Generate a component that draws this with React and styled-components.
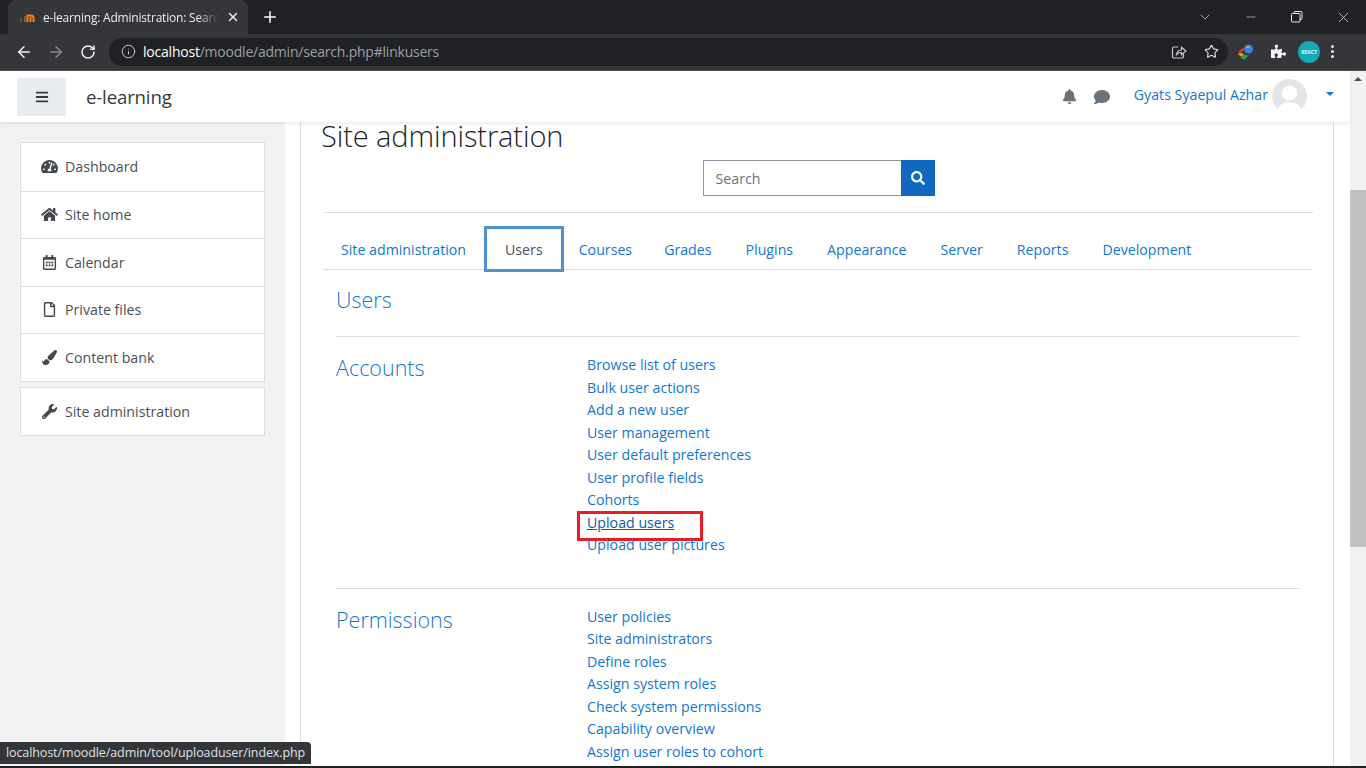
import React from 'react';
import styled, { createGlobalStyle } from 'styled-components';
import { FaBars, FaBell, FaComment, FaSearch, FaTachometerAlt, FaHome, FaRegCalendarAlt, FaRegFile, FaPaintBrush, FaWrench, FaPuzzlePiece } from 'react-icons/fa';
import { ArrowLeft, ArrowRight, RotateCw, Info, Star, X, Plus, ChevronDown, Minus } from 'lucide-react';

const Global = createGlobalStyle`
  html, body { margin: 0; padding: 0; height: 768px; overflow: hidden; background: #fff; }
  * { box-sizing: border-box; }
  body { font-family: "Open Sans", "Noto Sans", sans-serif; }
`;
const Screen = styled.div`width:1366px;height:768px;display:flex;flex-direction:column;position:relative;overflow:hidden;`;
const TabStrip = styled.div`height:34px;background:#202124;display:flex;align-items:flex-end;padding-left:8px;color:#fff;`;
const Tab = styled.div`width:240px;height:34px;background:#35363a;border-radius:8px 8px 0 0;display:flex;align-items:center;padding:0 8px 0 12px;gap:7px;`;
const TabTitle = styled.span`flex:1;font:12px "Open Sans",sans-serif;letter-spacing:-.2px;color:#e8eaed;white-space:nowrap;overflow:hidden;-webkit-mask-image:linear-gradient(90deg,#000 88%,transparent);`;
const NewTab = styled.div`width:28px;height:34px;margin-left:8px;display:flex;align-items:center;justify-content:center;`;
const WinControls = styled.div`margin-left:auto;height:34px;display:flex;align-items:center;color:#e8eaed;`;
const WinBtn = styled.div`width:46px;height:30px;display:flex;align-items:center;justify-content:center;`;
const Toolbar = styled.div`height:37px;background:#35363a;border-bottom:1px solid #4d4e52;display:flex;align-items:center;padding:0 0 1px 8px;color:#e8eaed;`;
const NavIcon = styled.div`width:32px;height:32px;display:flex;align-items:center;justify-content:center;color:${p=>p.$dim?'#8a8b8e':'#f1f3f4'};`;
const Omnibox = styled.div`margin-left:5px;width:1119px;height:28px;background:#202124;border-radius:14px;display:flex;align-items:center;padding:0 9px 0 12px;`;
const Url = styled.div`flex:1;margin-left:7px;font:14px "Open Sans",sans-serif;letter-spacing:-.22px;color:#9aa0a6;b{font-weight:400;color:#fff;}`;
const ExtRow = styled.div`display:flex;align-items:center;margin-left:9px;gap:9px;`;
const Badge = styled.div`width:22px;height:22px;border-radius:50%;background:#12aab5;color:#e8f8f8;font:700 5px "Open Sans",sans-serif;display:flex;align-items:center;justify-content:center;`;
const Dots = styled.div`margin-left:11px;display:flex;flex-direction:column;gap:2px;i{width:3px;height:3px;border-radius:50%;background:#e8eaed;display:block;}`;

const Viewport = styled.div`flex:1;min-height:0;display:flex;`;
const Page = styled.div`flex:1;min-width:0;display:flex;flex-direction:column;position:relative;`;
const Navbar = styled.header`height:51px;background:#fff;box-shadow:0 2px 4px rgba(0,0,0,.08);position:relative;z-index:2;display:flex;align-items:center;padding:0 16px 0 17px;`;
const Burger = styled.div`width:49px;height:38px;background:#e9ecef;display:flex;align-items:center;justify-content:center;color:#343a40;`;
const Brand = styled.div`margin-left:20px;font-size:18.6px;color:#343a40;letter-spacing:-.15px;`;
const NavRight = styled.div`margin-left:auto;display:flex;align-items:center;color:#6a737b;`;
const UserName = styled.span`margin-left:24px;color:#1177d1;font-size:14.2px;position:relative;top:-2px;`;
const Avatar = styled.div`width:35px;height:35px;margin-left:4px;border-radius:50%;background:#e5e5e5;overflow:hidden;`;
const Caret = styled.div`margin-left:19px;position:relative;top:-3px;width:0;height:0;border:4.5px solid transparent;border-top-color:#1177d1;border-bottom:0;`;
const Body = styled.div`flex:1;min-height:0;display:flex;overflow:hidden;`;
const Sidebar = styled.aside`width:285px;background:#f2f2f2;padding:20px 20px 0;flex:none;`;
const NavGroup = styled.div`background:#fff;border:1px solid #dedede;margin-bottom:5px;`;
const NavItem = styled.div`height:${p=>p.$h||47.5}px;display:flex;align-items:center;padding-left:20px;color:#495057;font-size:14.2px;border-top:${p=>p.$first?'0':'1px solid #dedede'};svg{width:17px;height:15px;margin-right:7px;color:#43494f;flex:none;}`;
const Main = styled.main`flex:1;background:#fff;padding:0 16px 0 15px;min-width:0;`;
const Card = styled.div`height:100%;border-left:1px solid #dedede;border-right:1px solid #dedede;padding:0 20px;`;
const Title = styled.h1`margin:0;height:28px;font-weight:300;font-size:29px;line-height:28px;color:#212529;letter-spacing:-.1px;`;
const SearchRow = styled.div`display:flex;justify-content:center;margin:10px 0 0 3px;padding-bottom:16px;border-bottom:1px solid #dedede;`;
const SearchInput = styled.div`width:198px;height:36px;border:1px solid #8f959e;border-right:0;padding:0 12px;display:flex;align-items:center;color:#6a737b;font-size:14.2px;`;
const SearchBtn = styled.div`width:34px;height:36px;background:#1069bf;color:#fff;display:flex;align-items:center;justify-content:center;`;
const Tabs = styled.nav`margin:13px 0 0 2px;height:44px;display:flex;border-bottom:1px solid #dedede;padding-right:0;`;
const TabLink = styled.div`height:46px;padding:0 ${p=>p.$p||17}px;display:flex;align-items:center;font-size:14.2px;color:${p=>p.$active?'#495057':'#1177d1'};border:${p=>p.$active?'3px solid #4f93ce':'0'};background:${p=>p.$active?'#fff':'transparent'};position:relative;${p=>p.$active?'margin:0;':'margin-top:0;'}`;
const Inner = styled.div`padding:0 14px 0 15px;`;
const Heading = styled.h2`margin:0;font-weight:300;font-size:21.5px;line-height:26px;color:#1177d1;`;
const UsersRow = styled.div`padding:17px 0 23px;border-bottom:1px solid #dedede;`;
const Section = styled.section`display:flex;padding:${p=>p.$top||17}px 0 31px;border-bottom:${p=>p.$last?'0':'1px solid #dedede'};`;
const SectionName = styled.div`width:251px;flex:none;padding-top:1px;`;
const Links = styled.ul`list-style:none;margin:0;padding:0;`;
const LinkItem = styled.li`height:22.5px;line-height:22.5px;font-size:14.2px;color:#1177d1;white-space:nowrap;position:relative;`;
const Highlighted = styled.span`text-decoration:underline;color:#0a5aa8;&::after{content:"";position:absolute;left:-10px;top:-1px;width:120px;height:24px;border:3px solid #ec1c24;}`;
const Status = styled.div`position:absolute;left:0;bottom:2px;height:22px;padding:0 6px;background:#35363a;border-radius:0 4px 0 0;color:#dfe1e5;font-size:12.5px;letter-spacing:-.1px;line-height:21px;z-index:5;`;
const Scrollbar = styled.div`width:16px;flex:none;background:#f1f1f1;display:flex;flex-direction:column;align-items:center;`;
const ArrowUp = styled.div`margin-top:6px;flex:none;width:0;height:0;border:4px solid transparent;border-bottom:4px solid #505050;border-top:0;`;
const Thumb = styled.div`margin-top:109px;width:16px;height:357px;flex:none;background:#c1c1c1;`;
const Taskbar = styled.div`height:2px;flex:none;background:#202124;`;

const ChromeIcon = () => (
  <svg width="16" height="16" viewBox="0 0 16 16">
    <path d="M1 13V8.5" stroke="#6b5a4a" strokeWidth="1.5" fill="none"/>
    <path d="M5 13V7" stroke="#8a6a45" strokeWidth="1.6" fill="none"/>
    <path d="M7.5 13V6.5h3.5a2.5 2.5 0 0 1 2.5 2.5V13M10.5 13V8" stroke="#f98012" strokeWidth="2" fill="none"/>
  </svg>
);
const ShareIcon = () => (
  <svg width="16" height="16" viewBox="0 0 16 16" fill="none" stroke="#c6c8ca" strokeWidth="1.2">
    <path d="M7 3H3a1.5 1.5 0 0 0-1.5 1.5v8A1.5 1.5 0 0 0 3 14h8a1.5 1.5 0 0 0 1.5-1.5V10"/>
    <path d="M5.5 10.5C6 7.5 8 6 10.5 6V3.2L15 7l-4.5 3.8V8.5c-2 0-3.700.5-5 2z"/>
  </svg>
);
const GlobeExt = () => (
  <svg width="18" height="18" viewBox="0 0 18 18">
    <path d="M1 11c1-4 4-6 7-6l-2 3c-1.500 0-2 1-2 2l3 1-3 2z" fill="#d8432f"/>
    <path d="M1 12l3-2 3 1.500L5 13z" fill="#f4b400"/>
    <path d="M3 14l4-2.500 5 1L7 17z" fill="#2f9e44"/>
    <circle cx="11.500" cy="6" r="4.500" fill="#3d7fe0"/>
    <path d="M9 4c1-1 3-1 4 0-1 1-3 2-4 0z" fill="#9bd06a"/>
  </svg>
);
const Silhouette = () => (
  <svg width="35" height="35" viewBox="0 0 35 35"><circle cx="17.500" cy="14" r="7.500" fill="#fff"/><ellipse cx="17.500" cy="32" rx="12" ry="9" fill="#fff"/></svg>
);
const RestoreIcon = () => (
  <svg width="12" height="12" viewBox="0 0 12 12" fill="none" stroke="#e8eaed" strokeWidth="1"><rect x=".5" y="2.500" width="8.500" height="8.500" rx="1"/><path d="M3 2.500V1.500a1 1 0 0 1 1-1h6a1 1 0 0 1 1 1v6a1 1 0 0 1-1 1H9"/></svg>
);

const navItems = [
  [FaTachometerAlt, 'Dashboard'], [FaHome, 'Site home'], [FaRegCalendarAlt, 'Calendar'], [FaRegFile, 'Private files'], [FaPaintBrush, 'Content bank'],
];
const tabs = [['Site administration', 18], ['Users', 18, true], ['Courses', 15], ['Grades', 17], ['Plugins', 17], ['Appearance', 17], ['Server', 17], ['Reports', 17], ['Development', 17]];
const accounts = ['Browse list of users', 'Bulk user actions', 'Add a new user', 'User management', 'User default preferences', 'User profile fields', 'Cohorts', 'Upload users', 'Upload user pictures'];
const permissions = ['User policies', 'Site administrators', 'Define roles', 'Assign system roles', 'Check system permissions', 'Capability overview', 'Assign user roles to cohort'];

export default function App() {
  return (
    <Screen>
      <Global />
      <TabStrip>
        <Tab>
          <ChromeIcon />
          <TabTitle>e-learning: Administration: Search</TabTitle>
          <X size={14} strokeWidth={2.5} color="#e8eaed" />
        </Tab>
        <NewTab><Plus size={18} strokeWidth={2} /></NewTab>
        <WinControls>
          <WinBtn><ChevronDown size={16} strokeWidth={1} /></WinBtn>
          <WinBtn><Minus size={14} strokeWidth={1} /></WinBtn>
          <WinBtn><RestoreIcon /></WinBtn>
          <WinBtn><X size={17} strokeWidth={1} /></WinBtn>
        </WinControls>
      </TabStrip>
      <Toolbar>
        <NavIcon><ArrowLeft size={18} strokeWidth={2} /></NavIcon>
        <NavIcon $dim><ArrowRight size={18} strokeWidth={2} /></NavIcon>
        <NavIcon><RotateCw size={16} strokeWidth={2.2} /></NavIcon>
        <Omnibox>
          <Info size={15} color="#c6c8ca" strokeWidth={1.6} />
          <Url><b>localhost</b>/moodle/admin/search.php#linkusers</Url>
          <ShareIcon />
          <Star size={15} strokeWidth={1.8} color="#dfe1e5" style={{ marginLeft: 17 }} />
        </Omnibox>
        <ExtRow>
          <GlobeExt />
          <FaPuzzlePiece size={15} color="#f1f3f4" style={{ marginLeft: 7 }} />
          <Badge style={{ marginLeft: 3 }}>REACT</Badge>
        </ExtRow>
        <Dots><i /><i /><i /></Dots>
      </Toolbar>
      <Viewport>
        <Page>
          <Navbar>
            <Burger><FaBars size={14} /></Burger>
            <Brand>e-learning</Brand>
            <NavRight>
              <FaBell size={15} />
              <FaComment size={16} style={{ marginLeft: 17 }} />
              <UserName>Gyats Syaepul Azhar</UserName>
              <Avatar><Silhouette /></Avatar>
              <Caret />
            </NavRight>
          </Navbar>
          <Body>
            <Sidebar>
              <NavGroup>
                {navItems.map(([I, t], i) => (
                  <NavItem key={t} $first={i === 0}><I />{t}</NavItem>
                ))}
              </NavGroup>
              <NavGroup>
                <NavItem $first><FaWrench />Site administration</NavItem>
              </NavGroup>
            </Sidebar>
            <Main>
              <Card>
                <Title>Site administration</Title>
                <SearchRow>
                  <SearchInput>Search</SearchInput>
                  <SearchBtn><FaSearch size={14} /></SearchBtn>
                </SearchRow>
                <Tabs>
                  {tabs.map(([t, p, a]) => <TabLink key={t} $p={p} $active={a}>{t}</TabLink>)}
                </Tabs>
                <Inner>
                  <UsersRow><Heading>Users</Heading></UsersRow>
                  <Section>
                    <SectionName><Heading>Accounts</Heading></SectionName>
                    <Links>
                      {accounts.map(t => <LinkItem key={t}>{t === 'Upload users' ? <Highlighted>{t}</Highlighted> : t}</LinkItem>)}
                    </Links>
                  </Section>
                  <Section $last>
                    <SectionName><Heading>Permissions</Heading></SectionName>
                    <Links>
                      {permissions.map(t => <LinkItem key={t}>{t}</LinkItem>)}
                    </Links>
                  </Section>
                </Inner>
              </Card>
            </Main>
          </Body>
          <Status>localhost/moodle/admin/tool/uploaduser/index.php</Status>
        </Page>
        <Scrollbar>
          <ArrowUp />
          <Thumb />
        </Scrollbar>
      </Viewport>
      <Taskbar />
    </Screen>
  );
}
